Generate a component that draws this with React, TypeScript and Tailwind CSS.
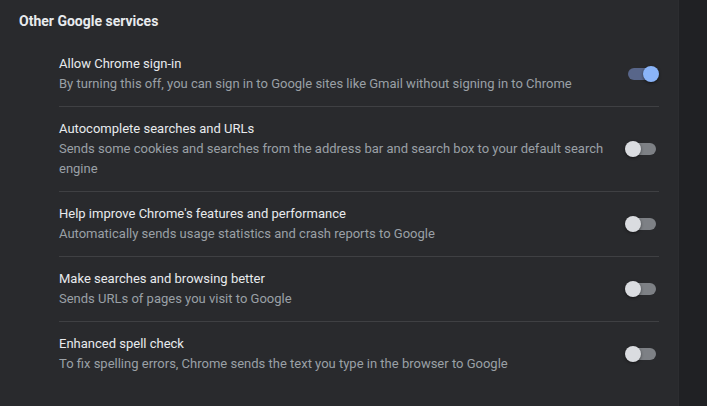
import React from "react";

const ROWS = [
  {
    title: "Allow Chrome sign-in",
    desc: "By turning this off, you can sign in to Google sites like Gmail without signing in to Chrome",
    on: true,
  },
  {
    title: "Autocomplete searches and URLs",
    desc: "Sends some cookies and searches from the address bar and search box to your default search engine",
    on: false,
  },
  {
    title: "Help improve Chrome's features and performance",
    desc: "Automatically sends usage statistics and crash reports to Google",
    on: false,
  },
  {
    title: "Make searches and browsing better",
    desc: "Sends URLs of pages you visit to Google",
    on: false,
  },
  {
    title: "Enhanced spell check",
    desc: "To fix spelling errors, Chrome sends the text you type in the browser to Google",
    on: false,
  },
];

function Toggle({ on }: { on: boolean }) {
  return (
    <div className="relative w-[34px] h-4 shrink-0">
      <div
        className={`absolute left-[3px] top-[2px] w-[28px] h-3 rounded-full ${
          on ? "bg-[#58668a]" : "bg-[#7d8085]"
        }`}
      />
      <div
        className={`absolute top-0 w-4 h-4 rounded-full shadow-[0_1px_3px_rgba(0,0,0,0.5)] ${
          on ? "left-[18px] bg-[#8ab4f8]" : "left-0 bg-[#dadce0]"
        }`}
      />
    </div>
  );
}

export default function App() {
  return (
    <div
      className="flex w-[707px] h-[406px] bg-[#202124] overflow-hidden"
      style={{ fontFamily: "Roboto, 'Liberation Sans', sans-serif" }}
    >
      <div className="w-[679px] h-full bg-[#292a2d] border-r border-[#2c2d30]">
        <div className="h-[42px] pl-[19px] pt-[11px] text-[14px] leading-5 font-bold text-[#e8eaed]">
          Other Google services
        </div>
        <div className="pl-[59px] pr-[19px]">
          {ROWS.map((row, i) => (
            <div
              key={row.title}
              className={`flex items-center py-3 ${
                i < ROWS.length - 1 ? "border-b border-[#3f4043]" : ""
              }`}
            >
              <div className="flex-1 pr-[20px] text-[13px] leading-5">
                <div className="text-[#e8eaed]">{row.title}</div>
                <div className="text-[#9aa0a6]">{row.desc}</div>
              </div>
              <Toggle on={row.on} />
            </div>
          ))}
        </div>
      </div>
    </div>
  );
}
